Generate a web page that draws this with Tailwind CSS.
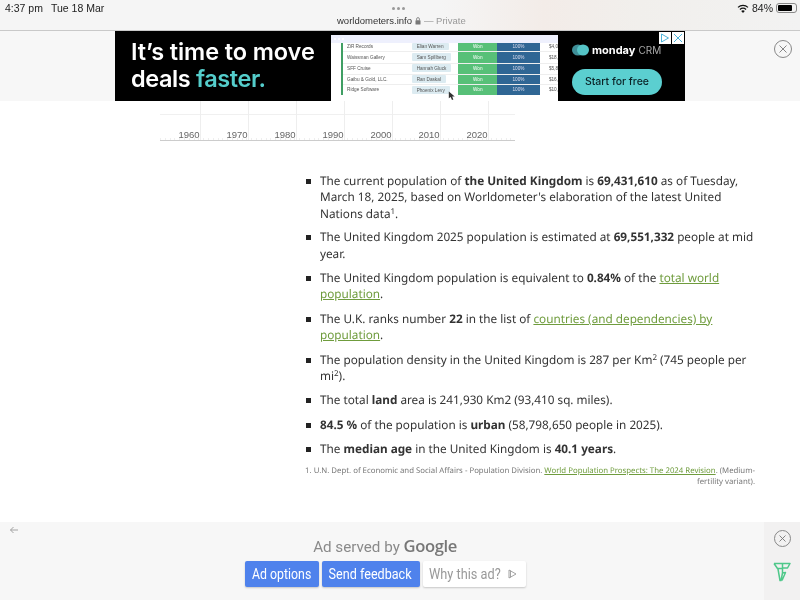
<!DOCTYPE html>
<html>
<head>
<meta charset="utf-8">
<script src="https://cdn.jsdelivr.net/npm/@tailwindcss/browser@4"></script>
</head>
<body class="w-[800px] h-[600px] overflow-hidden bg-white font-['Noto_Sans',sans-serif] flex flex-col relative">

<!-- Browser status bar -->
<header class="h-[31px] shrink-0 relative border-b border-[#c9c9c9] bg-[linear-gradient(90deg,#f5f5f5_0%,#f5f5f5_55%,#f3ece8_68%,#f1efec_80%,#f2f2f2_100%)] font-['Liberation_Sans',sans-serif] blur-[0.25px]">
  <div class="flex justify-between items-start h-[16px] pl-[5px] pr-[3px] pt-[1px]">
    <div class="flex gap-[8px] text-[10.5px] leading-[14px] text-[#222]"><span>4:37 pm</span><span>Tue 18 Mar</span></div>
    <div class="flex items-center gap-[3px] text-[10.5px] leading-[14px] text-[#222]">
      <svg width="12" height="9" viewBox="0 0 12 9"><path d="M6 9 L4.2 6.9 A3 3 0 0 1 7.8 6.9Z" fill="#111"/><path d="M2.9 5.5 A4.8 4.8 0 0 1 9.1 5.5" fill="none" stroke="#111" stroke-width="1.2"/><path d="M1 3.4 A7.4 7.4 0 0 1 11 3.4" fill="none" stroke="#111" stroke-width="1.2"/></svg>
      <span>84%</span>
      <div class="w-[21px] h-[10px] border border-[#888] rounded-[3px] p-[1px] flex"><div class="w-[14px] bg-black rounded-[1px]"></div></div>
    </div>
  </div>
  <div class="absolute left-[392px] top-[7px] flex gap-[2px]"><i class="w-[3px] h-[3px] rounded-full bg-[#999]"></i><i class="w-[3px] h-[3px] rounded-full bg-[#999]"></i><i class="w-[3px] h-[3px] rounded-full bg-[#999]"></i></div>
  <div class="absolute left-[337px] top-[14px] flex items-center text-[9.5px] leading-[14px] whitespace-nowrap">
    <span class="text-[#333]">worldometers.info</span>
    <svg class="mx-[3px]" width="6" height="8" viewBox="0 0 6 8"><rect x="0.5" y="3.2" width="5" height="4.3" rx="0.6" fill="#777"/><path d="M1.6 3.4V2a1.4 1.4 0 0 1 2.8 0v1.4" fill="none" stroke="#777" stroke-width="0.8"/></svg>
    <span class="text-[#999]">— Private</span>
  </div>
</header>

<!-- Top ad strip -->
<section class="h-[70px] shrink-0 bg-[#f7f7f7] relative flex justify-start pl-[115px]">
  <div class="w-[570px] h-[70px] bg-black relative flex overflow-hidden">
    <div class="w-[216px] shrink-0 pl-[16px] pt-[7px] font-['Inter',sans-serif] font-semibold text-[23.5px] leading-[27px] text-white tracking-[-0.1px] whitespace-nowrap blur-[0.25px]">
      <div>It’s time to move</div>
      <div class="tracking-[-0.4px]">deals <span class="text-[#54cdcb]">faster.</span></div>
    </div>
    <!-- mini table -->
    <div class="w-[227px] h-[66px] mt-[4px] shrink-0 bg-white flex flex-col font-['Liberation_Sans',sans-serif] text-[4.7px] text-[#555] blur-[0.35px]">
      <div class="h-[8px] shrink-0 bg-[#eef0fd] flex items-center gap-[2px] pl-[3px]"><i class="w-[2px] h-[2px] rounded-full bg-white"></i><i class="w-[2px] h-[2px] rounded-full bg-white"></i><i class="w-[2px] h-[2px] rounded-full bg-white"></i></div>
      <div class="ml-[10px] w-[217px] border-l-[2px] border-[#3f9e63] flex flex-col">
        <div class="h-[9px] flex items-center border-b border-[#eee]"><span class="w-[69px] pl-[4px]">ZiR Records</span><span class="w-[47px]"><b class="font-normal bg-[#dcebf1] px-[5px] py-[1px] rounded-[1px]">Elian Warren</b></span><span class="w-[39px] h-full bg-[#57c078] text-white flex items-center justify-center">Won</span><span class="w-[43px] h-full bg-[#2f6694] text-[#dde] flex items-center justify-center">100%</span><span class="pl-[9px]">$4,0</span></div>
        <div class="h-[11.5px] flex items-center border-b border-[#eee]"><span class="w-[69px] pl-[4px]">Waissman Gallery</span><span class="w-[47px]"><b class="font-normal bg-[#dcebf1] px-[5px] py-[1.5px] rounded-[1px]">Sam Spillberg</b></span><span class="w-[39px] h-full bg-[#57c078] text-white flex items-center justify-center">Won</span><span class="w-[43px] h-full bg-[#2f6694] text-[#dde] flex items-center justify-center">100%</span><span class="pl-[9px]">$18,</span></div>
        <div class="h-[11px] flex items-center border-b border-[#eee]"><span class="w-[69px] pl-[4px]">SFF Cruise</span><span class="w-[47px]"><b class="font-normal bg-[#dcebf1] px-[5px] py-[1.5px] rounded-[1px]">Hannah Gluck</b></span><span class="w-[39px] h-full bg-[#57c078] text-white flex items-center justify-center">Won</span><span class="w-[43px] h-full bg-[#2f6694] text-[#dde] flex items-center justify-center">100%</span><span class="pl-[9px]">$5,8</span></div>
        <div class="h-[10.5px] flex items-center border-b border-[#eee]"><span class="w-[69px] pl-[4px]">Gaibu &amp; Gold, LLC.</span><span class="w-[47px]"><b class="font-normal bg-[#dcebf1] px-[5px] py-[1.5px] rounded-[1px]">Ran Daskal</b></span><span class="w-[39px] h-full bg-[#57c078] text-white flex items-center justify-center">Won</span><span class="w-[43px] h-full bg-[#2f6694] text-[#dde] flex items-center justify-center">100%</span><span class="pl-[9px]">$16,</span></div>
        <div class="h-[10px] flex items-center"><span class="w-[69px] pl-[4px]">Ridge Software</span><span class="w-[47px]"><b class="font-normal bg-[#dcebf1] px-[5px] py-[1.5px] rounded-[1px]">Phoenix Levy</b></span><span class="w-[39px] h-full bg-[#57c078] text-white flex items-center justify-center">Won</span><span class="w-[43px] h-full bg-[#2f6694] text-[#dde] flex items-center justify-center">100%</span><span class="pl-[9px]">$10,</span></div>
      </div>
    </div>
    <!-- logo + cta -->
    <div class="flex-1 pl-[14px] pt-[11px] blur-[0.25px]">
      <div class="flex items-center gap-[3px] font-['Inter',sans-serif] text-white whitespace-nowrap">
        <svg width="17" height="12" viewBox="0 0 17 12"><ellipse cx="6" cy="6" rx="6" ry="5.5" fill="#3f8f98"/><ellipse cx="11" cy="6" rx="6" ry="5.5" fill="#55c4c6"/></svg>
        <span class="text-[11px] font-bold">monday</span><span class="text-[10px] text-[#aaa]">CRM</span>
      </div>
      <div class="w-[90px] h-[26px] mt-[10px] rounded-full bg-[#5bcfd0] text-[#0b2226] text-[10.5px] leading-[26px] text-center font-['Inter',sans-serif] font-medium whitespace-nowrap">Start for free</div>
    </div>
    <!-- ad choices -->
    <div class="absolute right-[1px] top-[1px] flex gap-[1px]">
      <div class="w-[12px] h-[12px] bg-white flex items-center justify-center"><svg width="10" height="10" viewBox="0 0 10 10"><path d="M1.5 1 L8.5 5 L1.5 9Z" fill="none" stroke="#4db3d8" stroke-width="1"/></svg></div>
      <div class="w-[12px] h-[12px] bg-white flex items-center justify-center"><svg width="10" height="10" viewBox="0 0 10 10"><path d="M1 1 L9 9 M9 1 L1 9" stroke="#4db3d8" stroke-width="1"/></svg></div>
    </div>
    <!-- cursor -->
    <svg class="absolute left-[333px] top-[60px]" width="8" height="10" viewBox="0 0 8 11"><path d="M0.5 0.5 L0.5 8 L2.5 6.5 L4 10 L5.5 9.3 L4.2 6 L7 6Z" fill="#333"/></svg>
  </div>
  <button class="absolute left-[774px] top-[9px] w-[18px] h-[18px] rounded-full border border-[#888] flex items-center justify-center">
    <svg width="10" height="10" viewBox="0 0 10 10"><path d="M1.5 1.5 L8.5 8.5 M8.5 1.5 L1.5 8.5" stroke="#777" stroke-width="0.9"/></svg>
  </button>
</section>

<!-- Chart remainder -->
<section class="h-[40px] shrink-0 ml-[160px] w-[355px] relative border-b border-[#ccc] blur-[0.25px]">
  <div class="absolute left-0 right-0 top-[13px] border-t border-[#f0f0f0]"></div>
  <div class="absolute left-[40px] top-0 bottom-0 w-[288px] grid grid-cols-[48px_48px_48px_48px_48px_48px_0] border-l border-[#eeeeee]">
    <i class="border-r border-[#eee]"></i><i class="border-r border-[#eee]"></i><i class="border-r border-[#eee]"></i><i class="border-r border-[#eee]"></i><i class="border-r border-[#eee]"></i><i class="border-r border-[#eee]"></i>
  </div>
  <div class="absolute left-0 right-0 bottom-0 h-[2px] bg-[repeating-linear-gradient(90deg,#eee_0,#eee_1px,transparent_1px,transparent_4.8px)]"></div>
  <div class="absolute left-[18.5px] top-[28px] flex text-[9.5px] leading-[12px] text-[#666] font-['Liberation_Sans',sans-serif]">
    <span class="w-[48px]">1960</span><span class="w-[48px]">1970</span><span class="w-[48px]">1980</span><span class="w-[48px]">1990</span><span class="w-[48px]">2000</span><span class="w-[48px]">2010</span><span class="w-[48px]">2020</span>
  </div>
</section>

<!-- Article -->
<main class="ml-[305px] w-[450px] pt-[32px] text-[11.75px] leading-[16.4px] text-[#333] flex-1 blur-[0.25px] [text-rendering:geometricPrecision]">
  <ul class="flex flex-col gap-[8px]">
    <li class="flex -mb-[1px]"><i class="w-[5px] h-[5px] bg-[#222] mt-[6px] mr-[9px] ml-[1px] shrink-0"></i><p class="w-[435px]">The current population of <b>the United Kingdom</b> is <b>69,431,610</b> as of Tuesday, March 18, 2025, based on Worldometer's elaboration of the latest United Nations data<sup class="text-[8px] leading-[0]">1</sup>.</p></li>
    <li class="flex"><i class="w-[5px] h-[5px] bg-[#222] mt-[6px] mr-[9px] ml-[1px] shrink-0"></i><p class="w-[435px]">The United Kingdom 2025 population is estimated at <b>69,551,332</b> people at mid year.</p></li>
    <li class="flex"><i class="w-[5px] h-[5px] bg-[#222] mt-[6px] mr-[9px] ml-[1px] shrink-0"></i><p class="w-[435px]">The United Kingdom population is equivalent to <b>0.84%</b> of the <a class="text-[#6f9c3d] underline">total world population</a>.</p></li>
    <li class="flex"><i class="w-[5px] h-[5px] bg-[#222] mt-[6px] mr-[9px] ml-[1px] shrink-0"></i><p class="w-[435px]">The U.K. ranks number <b>22</b> in the list of <a class="text-[#6f9c3d] underline">countries (and dependencies) by population</a>.</p></li>
    <li class="flex"><i class="w-[5px] h-[5px] bg-[#222] mt-[6px] mr-[9px] ml-[1px] shrink-0"></i><p class="w-[435px]">The population density in the United Kingdom is 287 per Km<sup class="text-[8px] leading-[0]">2</sup> (745 people per mi<sup class="text-[8px] leading-[0]">2</sup>).</p></li>
    <li class="flex"><i class="w-[5px] h-[5px] bg-[#222] mt-[6px] mr-[9px] ml-[1px] shrink-0"></i><p class="w-[435px]">The total <b>land</b> area is 241,930 Km2 (93,410 sq. miles).</p></li>
    <li class="flex"><i class="w-[5px] h-[5px] bg-[#222] mt-[6px] mr-[9px] ml-[1px] shrink-0"></i><p class="w-[435px]"><b>84.5 %</b> of the population is <b>urban</b> (58,798,650 people in 2025).</p></li>
    <li class="flex"><i class="w-[5px] h-[5px] bg-[#222] mt-[6px] mr-[9px] ml-[1px] shrink-0"></i><p class="w-[435px]">The <b>median age</b> in the United Kingdom is <b>40.1 years</b>.</p></li>
  </ul>
  <p class="mt-[8px] text-[7.8px] leading-[11px] text-[#777] text-right">1. U.N. Dept. of Economic and Social Affairs - Population Division. <a class="text-[#6f9c3d] underline">World Population Prospects: The 2024 Revision</a>. (Medium-fertility variant).</p>
</main>

<!-- Bottom ad feedback -->
<footer class="h-[78px] shrink-0 bg-[#f7f7f7] flex font-['Roboto',sans-serif]">
  <div class="flex-1 relative flex flex-col items-center pt-[14px] pl-[6px] blur-[0.25px]">
    <svg class="absolute left-[9px] top-[3px]" width="10" height="10" viewBox="0 0 10 10"><path d="M9 5H1.5 M4.5 2 L1.5 5 L4.5 8" fill="none" stroke="#999" stroke-width="0.9"/></svg>
    <div class="text-[15.2px] leading-[20px] text-[#8a8a8a] whitespace-nowrap">Ad served by <span class="font-['Open_Sans',sans-serif] font-semibold text-[16.6px] tracking-[-0.4px] text-[#777]">Google</span></div>
    <div class="flex gap-[3px] mt-[4px] text-[14px] leading-[26px]">
      <span class="h-[26px] w-[74px] text-center rounded-[2px] bg-[#4f82ec] text-white shadow-[0_1px_2px_#0003]"><span class="inline-block scale-x-[.88]">Ad options</span></span>
      <span class="h-[26px] w-[98px] text-center rounded-[2px] bg-[#4f82ec] text-white shadow-[0_1px_2px_#0003]"><span class="inline-block scale-x-[.9]">Send feedback</span></span>
      <span class="h-[26px] w-[103px] flex items-center pl-[6px] rounded-[2px] bg-white text-[#999] shadow-[0_1px_2px_#0003]"><span class="w-[79px] -mr-[7px] inline-block origin-left scale-x-[.91] whitespace-nowrap">Why this ad?</span>
        <svg class="ml-[7px]" width="9" height="10" viewBox="0 0 9 10"><path d="M1 1 L8 5 L1 9Z M2.5 1.5 V8.5" fill="none" stroke="#999" stroke-width="0.9"/></svg>
      </span>
    </div>
  </div>
  <aside class="w-[36px] bg-[#f2f1f1] flex flex-col items-center pt-[8px] gap-[15px]">
    <div class="w-[17px] h-[17px] rounded-full border border-[#888] flex items-center justify-center">
      <svg width="9" height="9" viewBox="0 0 9 9"><path d="M1.5 1.5 L7.5 7.5 M7.5 1.5 L1.5 7.5" stroke="#777" stroke-width="0.9"/></svg>
    </div>
    <svg width="18" height="20" viewBox="0 0 18 20"><path d="M1 1.5 H17 L14.5 6 H9.5 M1 1.5 L4.5 6.5 H9.5 M9.5 1.5 V11 L8 18.5 L7 18.5 L5 7 M9.5 11 L12.5 10.5 L9 18.5" fill="none" stroke="#4fc88a" stroke-width="1.5" stroke-linejoin="round"/></svg>
  </aside>
</footer>
</body>
</html>
